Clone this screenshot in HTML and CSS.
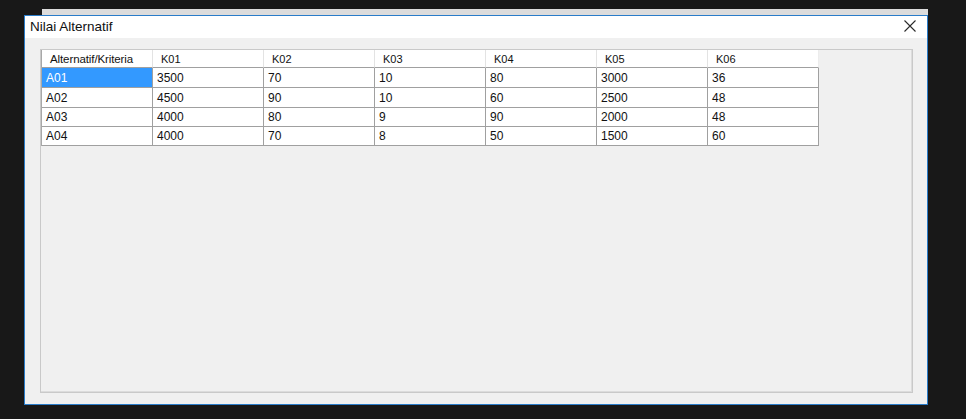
FILE: index.html
```html
<!DOCTYPE html>
<html>
<head>
<meta charset="utf-8">
<link rel="stylesheet" href="styles.css">
</head>
<body>
<div class="backwin"></div>
<div class="window">
  <div class="titlebar">
    <span class="title">Nilai Alternatif</span>
    <svg class="close" width="12" height="12" viewBox="0 0 12 12"><path d="M0.5 0.5 L11.5 11.5 M11.5 0.5 L0.5 11.5" stroke="#2a2a2a" stroke-width="1.1" fill="none"/></svg>
  </div>
  <div class="content">
    <div class="panel">
      <div class="grid">
        <div class="hcell first">Alternatif/Kriteria</div>
        <div class="hcell">K01</div>
        <div class="hcell">K02</div>
        <div class="hcell">K03</div>
        <div class="hcell">K04</div>
        <div class="hcell">K05</div>
        <div class="hcell last">K06</div>

        <div class="cell sel">A01</div><div class="cell">3500</div><div class="cell">70</div><div class="cell">10</div><div class="cell">80</div><div class="cell">3000</div><div class="cell">36</div>
        <div class="cell">A02</div><div class="cell">4500</div><div class="cell">90</div><div class="cell">10</div><div class="cell">60</div><div class="cell">2500</div><div class="cell">48</div>
        <div class="cell">A03</div><div class="cell">4000</div><div class="cell">80</div><div class="cell">9</div><div class="cell">90</div><div class="cell">2000</div><div class="cell">48</div>
        <div class="cell">A04</div><div class="cell">4000</div><div class="cell">70</div><div class="cell">8</div><div class="cell">50</div><div class="cell">1500</div><div class="cell">60</div>
      </div>
    </div>
  </div>
</div>
</body>
</html>
```
FILE: styles.css
```css
html, body {
  margin: 0;
  padding: 0;
}
body {
  background: #181818;
  width: 966px;
  height: 419px;
  overflow: hidden;
  padding-top: 9px;
  box-sizing: border-box;
  font-family: "Liberation Sans", Arial, sans-serif;
  color: #000;
}
.backwin {
  margin-left: 42px;
  width: 886px;
  height: 6px;
  background: #dcdcdc;
}
.window {
  margin-left: 24px;
  width: 904px;
  height: 390px;
  box-sizing: border-box;
  border: 1px solid #2a7cc9;
  background: #f0f0f0;
  display: flex;
  flex-direction: column;
}
.titlebar {
  height: 22px;
  background: #ffffff;
  display: flex;
  align-items: center;
  justify-content: space-between;
  padding-left: 5px;
  padding-right: 11px;
  flex-shrink: 0;
}
.title {
  font-size: 13.5px;
  color: #111;
  position: relative;
  top: -1px;
}
.close {
  display: block;
  position: relative;
  top: -1px;
}
.content {
  flex: 1;
  padding: 11px 14px 11px 15px;
  display: flex;
}
.panel {
  flex: 1;
  border: 1px solid #c9c9c9;
  box-shadow: inset -1px -1px 0 #dcdcdc;
  background: #f0f0f0;
}
.grid {
  display: grid;
  grid-template-columns: repeat(7, 111px);
  grid-template-rows: 18px 20px 20px 19px 19px;
  width: 778px;
  border-left: 1px solid #a8a8a8;
  box-sizing: border-box;
}
.hcell {
  background: #ffffff;
  border-right: 1px solid #e3e3e3;
  border-bottom: 1px solid #a0a0a0;
  box-sizing: border-box;
  font-size: 11px;
  color: #111;
  padding-left: 8px;
  display: flex;
  align-items: center;
}
.hcell.first {
  font-size: 11.5px;
  letter-spacing: -0.1px;
}
.hcell.last {
  border-right: 1px solid #ececec;
}
.cell {
  background: #ffffff;
  border-right: 1px solid #a0a0a0;
  border-bottom: 1px solid #a0a0a0;
  box-sizing: border-box;
  font-size: 12px;
  color: #111;
  padding-left: 4px;
  display: flex;
  align-items: center;
}
.cell.sel {
  background: #3399ff;
  color: #ffffff;
}
```
